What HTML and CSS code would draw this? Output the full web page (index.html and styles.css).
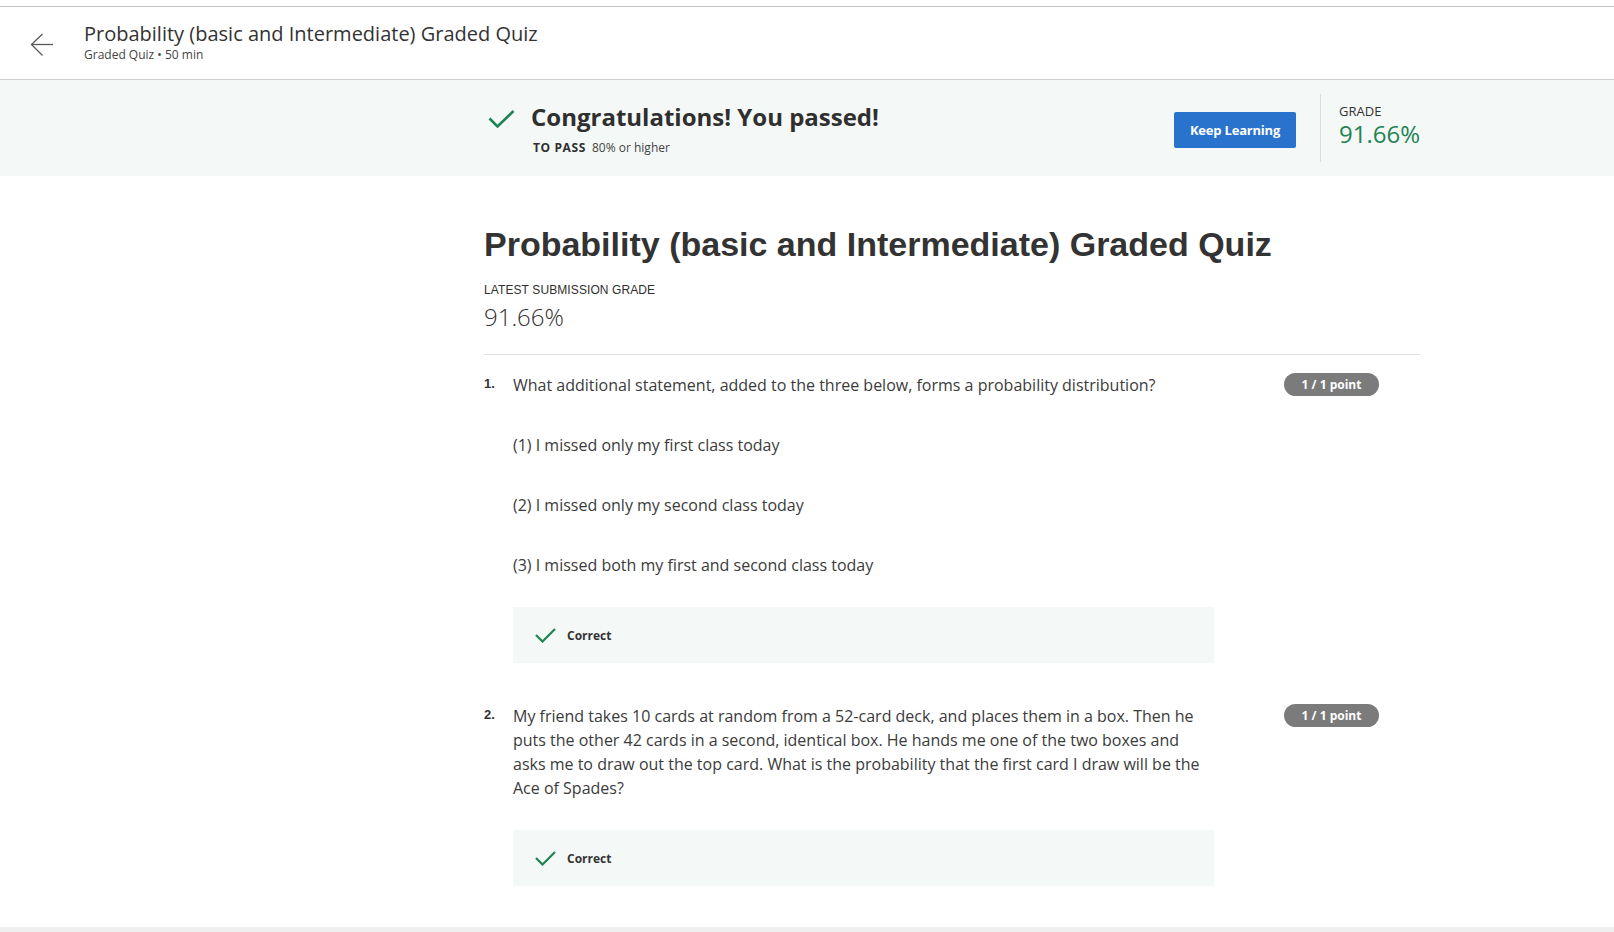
FILE: index.html
```html
<!DOCTYPE html>
<html lang="en">
<head>
<meta charset="utf-8">
<title>Probability (basic and Intermediate) Graded Quiz</title>
<link rel="stylesheet" href="styles.css">
</head>
<body>
<div class="page">
  <div class="chrome"></div>
  <header class="header">
    <a class="back" href="#" aria-label="Back">
      <svg width="24" height="24" viewBox="0 0 24 24" fill="none" stroke="#5a5a5a" stroke-width="1.3"><path d="M1.5 11.5H23"/><path d="M12.5 1L1.5 11.5L12.5 22.5"/></svg>
    </a>
    <div class="header-text">
      <div class="header-title">Probability (basic and Intermediate) Graded Quiz</div>
      <div class="header-sub">Graded Quiz • 50 min</div>
    </div>
  </header>

  <section class="banner">
    <div class="column banner-inner">
      <div class="passed">
        <svg class="passed-check" width="27" height="20" viewBox="0 0 27 20" fill="none" stroke="#1f8354" stroke-width="2.6"><path d="M1.5 9.5L9.5 17.5L25.5 2"/></svg>
        <div>
          <div class="passed-title">Congratulations! You passed!</div>
          <div class="passed-sub"><span class="to-pass">TO PASS</span> 80% or higher</div>
        </div>
      </div>
      <div class="banner-right">
        <button class="btn">Keep Learning</button>
        <div class="divider"></div>
        <div class="grade">
          <div class="grade-label">GRADE</div>
          <div class="grade-value">91.66%</div>
        </div>
      </div>
    </div>
  </section>

  <main class="main">
    <div class="column">
      <h1 class="title">Probability (basic and Intermediate) Graded Quiz</h1>
      <div class="latest-label">LATEST SUBMISSION GRADE</div>
      <div class="latest-value">91.66%</div>
      <hr class="rule">

      <div class="question q1">
        <div class="qnum">1.</div>
        <div class="qbody">
          <p class="qtext">What additional statement, added to the three below, forms a probability distribution?</p>
          <p class="opt">(1) I missed only my first class today</p>
          <p class="opt">(2) I missed only my second class today</p>
          <p class="opt">(3) I missed both my first and second class today</p>
          <div class="feedback fb1">
            <svg width="21" height="15" viewBox="0 0 21 15" fill="none" stroke="#1f8354" stroke-width="2.2"><path d="M1 7L7.5 13.5L20 1"/></svg>
            <span>Correct</span>
          </div>
        </div>
        <div class="badge">1 / 1 point</div>
      </div>

      <div class="question q2">
        <div class="qnum">2.</div>
        <div class="qbody">
          <p class="qtext">My friend takes 10 cards at random from a 52-card deck, and places them in a box. Then he puts the other 42 cards in a second, identical box. He hands me one of the two boxes and asks me to draw out the top card. What is the probability that the first card I draw will be the Ace of Spades?</p>
          <div class="feedback fb2">
            <svg width="21" height="15" viewBox="0 0 21 15" fill="none" stroke="#1f8354" stroke-width="2.2"><path d="M1 7L7.5 13.5L20 1"/></svg>
            <span>Correct</span>
          </div>
        </div>
        <div class="badge">1 / 1 point</div>
      </div>
    </div>
  </main>
</div>
</body>
</html>
```

FILE: styles.css
```css
* { box-sizing: border-box; }
html, body { margin: 0; padding: 0; }
body {
  background: #efefef;
  font-family: "Open Sans", "Liberation Sans", sans-serif;
  color: #373a3c;
}
.page { background: #fff; }

.chrome {
  height: 7px;
  border-bottom: 1px solid #c4c4c4;
}

.header {
  height: 73px;
  border-bottom: 1px solid #cfcfcf;
  display: flex;
  align-items: center;
  padding-left: 30px;
}
.back { display: flex; width: 24px; height: 24px; margin-right: 30px; margin-top: 3px; }
.header-text { display: flex; flex-direction: column; margin-top: -2px; }
.header-title { font-size: 20px; line-height: 26px; color: #333; }
.header-sub { font-size: 12px; line-height: 16px; color: #444; }

.column { width: 936px; margin-left: 484px; }

.banner {
  height: 96px;
  background: #f4f8f7;
  display: flex;
  align-items: center;
}
.banner-inner {
  display: flex;
  justify-content: space-between;
  align-items: center;
}
.passed { display: flex; align-items: flex-start; padding-left: 4px; }
.passed-check { margin-top: 8px; margin-right: 16px; }
.passed-title { font-size: 24px; line-height: 32px; font-weight: 700; color: #2f2f2f; }
.passed-sub { font-size: 12px; line-height: 16px; margin-top: 7px; padding-left: 2px; color: #444; }
.to-pass { font-weight: 700; letter-spacing: 0.6px; margin-right: 3px; color: #2f2f2f; }

.banner-right { display: flex; align-items: center; }
.btn {
  width: 122px;
  height: 36px;
  background: #2a73cc;
  color: #fff;
  border: none;
  border-radius: 2px;
  font-family: "Open Sans", "Liberation Sans", sans-serif;
  font-size: 13px;
  font-weight: 700;
  letter-spacing: -0.2px;
  padding: 0;
  margin-top: 4px;
}
.divider { width: 1px; height: 68px; background: #dcdcdc; margin-left: 24px; margin-right: 18px; }
.grade { width: 81px; margin-top: -4px; }
.grade-label { font-size: 13px; line-height: 16px; color: #333; }
.grade-value { font-size: 24px; line-height: 30px; color: #1f8354; }

.main { padding-top: 48px; padding-bottom: 41px; }
.title {
  margin: 0;
  font-family: "Liberation Sans", Arial, sans-serif;
  font-size: 34px;
  line-height: 40px;
  font-weight: 700;
  color: #333;
}
.latest-label {
  margin-top: 18px;
  font-family: "Liberation Sans", Arial, sans-serif;
  font-size: 12px;
  line-height: 16px;
  letter-spacing: 0.1px;
  color: #2f2f2f;
}
.latest-value { margin-top: 3px; font-size: 24px; line-height: 32px; font-weight: 300; color: #333; }
.rule { margin: 21px 0 0 0; border: none; border-top: 1px solid #e2e2e2; }

.question {
  display: grid;
  grid-template-columns: 29px 701px 70px 95px;
  align-items: start;
}
.q1 { margin-top: 18px; }
.q2 { margin-top: 41px; }
.qnum {
  font-family: "Liberation Sans", Arial, sans-serif;
  font-size: 13px;
  font-weight: 700;
  line-height: 22px;
  color: #333;
}
.qbody p { margin: 0; font-size: 16px; line-height: 24px; color: #3b3b3b; }
.qbody .opt { margin-top: 36px; }
.badge {
  grid-column: 4;
  height: 23px;
  border-radius: 12px;
  background: #7b7b7b;
  color: #fff;
  font-size: 12px;
  font-weight: 700;
  line-height: 23px;
  text-align: center;
}

.feedback {
  height: 56px;
  background: #f4f8f7;
  display: flex;
  align-items: center;
  padding-left: 22px;
}
.feedback svg { margin-right: 11px; }
.feedback span { font-size: 12px; font-weight: 700; color: #333; }
.fb1 { margin-top: 30px; }
.fb2 { margin-top: 30px; }
```
